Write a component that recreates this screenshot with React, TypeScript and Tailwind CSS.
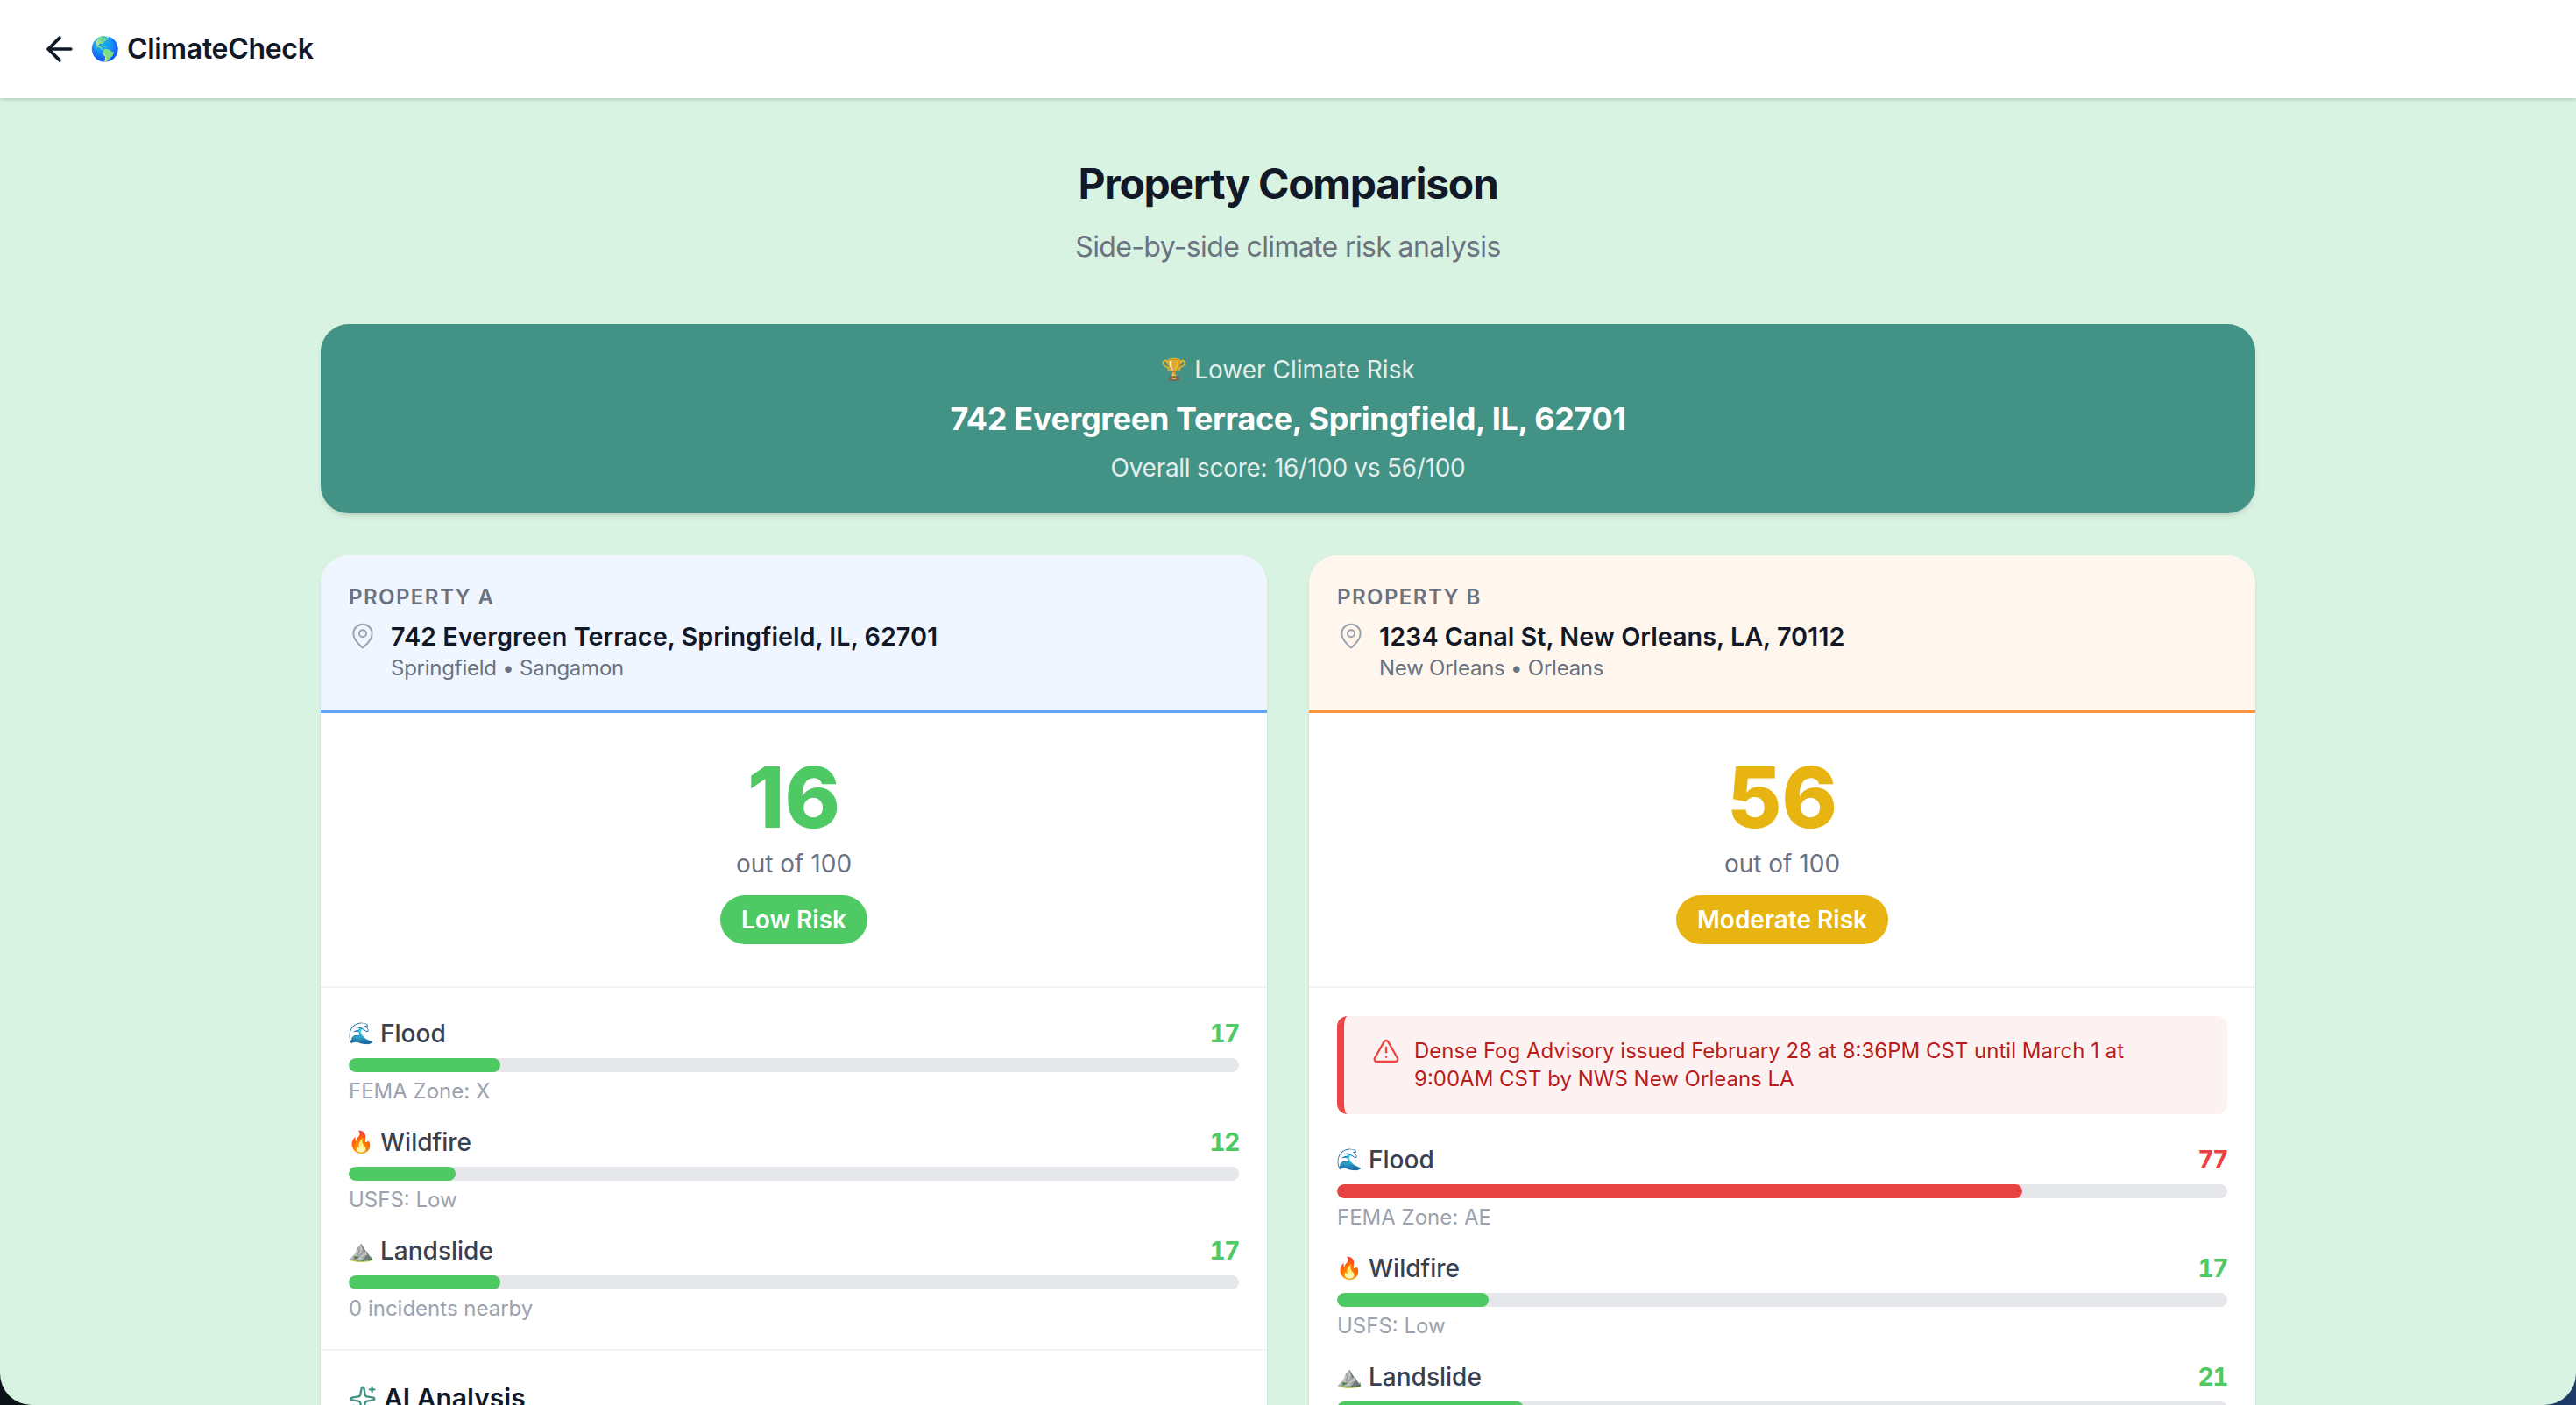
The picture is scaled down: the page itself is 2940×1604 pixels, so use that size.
/**
 * ClimateCheck — property comparison page.
 */
import { ArrowLeft, MapPin, Sparkles, TriangleAlert } from 'lucide-react'

type Risk = { emoji: string; label: string; score: number; note: string }

type Property = {
  tag: string
  address: string
  area: string
  score: number
  rating: string
  alert?: string
  risks: Risk[]
}

const PROPERTY_A: Property = {
  tag: 'Property A',
  address: '742 Evergreen Terrace, Springfield, IL, 62701',
  area: 'Springfield • Sangamon',
  score: 16,
  rating: 'Low Risk',
  risks: [
    { emoji: '🌊', label: 'Flood', score: 17, note: 'FEMA Zone: X' },
    { emoji: '🔥', label: 'Wildfire', score: 12, note: 'USFS: Low' },
    { emoji: '⛰️', label: 'Landslide', score: 17, note: '0 incidents nearby' },
  ],
}

const PROPERTY_B: Property = {
  tag: 'Property B',
  address: '1234 Canal St, New Orleans, LA, 70112',
  area: 'New Orleans • Orleans',
  score: 56,
  rating: 'Moderate Risk',
  alert: 'Dense Fog Advisory issued February 28 at 8:36PM CST until March 1 at 9:00AM CST by NWS New Orleans LA',
  risks: [
    { emoji: '🌊', label: 'Flood', score: 77, note: 'FEMA Zone: AE' },
    { emoji: '🔥', label: 'Wildfire', score: 17, note: 'USFS: Low' },
    { emoji: '⛰️', label: 'Landslide', score: 21, note: '1 incident nearby' },
  ],
}

function RiskRow({ risk }: { risk: Risk }) {
  const high = risk.score >= 70
  return (
    <div>
      <div className="flex items-center justify-between h-10">
        <span className="flex items-center gap-2 text-[28px] font-medium text-[#374151]">
          <span className="w-7 text-[24px] flex justify-center">{risk.emoji}</span>
          {risk.label}
        </span>
        <span className={`text-[28px] font-bold tabular-nums tracking-[-0.05em] ${high ? 'text-[#e84343]' : 'text-[#4fc963]'}`}>{risk.score}</span>
      </div>
      <div className="mt-2 h-4 rounded-full bg-[#e5e7eb] overflow-hidden">
        <div
          className={`h-full rounded-full ${high ? 'bg-[#e84343]' : 'bg-[#4fc963]'}`}
          style={{ width: `${risk.score}%` }}
        />
      </div>
      <div className="mt-2 text-[24px] leading-[28px] text-[#9ca3af]">{risk.note}</div>
    </div>
  )
}

function PropertyCard({ property, tone }: { property: Property; tone: 'a' | 'b' }) {
  const low = property.score < 40
  return (
    <div className="rounded-[32px] bg-white shadow-sm overflow-hidden">
      <div className={tone === 'a'
        ? 'px-8 pt-8 pb-8 bg-[#eff6ff] border-b-4 border-[#60a5fa]'
        : 'px-8 pt-8 pb-8 bg-[#fff7ed] border-b-4 border-[#fb923c]'}
      >
        <div className="text-[24px] leading-8 font-semibold uppercase tracking-[0.06em] text-[#6b7280]">{property.tag}</div>
        <div className="mt-2 flex gap-4">
          <MapPin className="w-8 h-8 mt-1 shrink-0 text-[#9ca3af]" strokeWidth={1.5} />
          <div>
            <div className="text-[28.8px] leading-[42px] font-semibold text-[#111827]">{property.address}</div>
            <div className="text-[24px] leading-[30px] tracking-[-0.01em] text-[#6b7280]">{property.area}</div>
          </div>
        </div>
      </div>

      <div className="pt-12 pb-12 flex flex-col items-center border-b-2 border-[#f3f4f6]">
        <div className={`text-[96px] leading-[96px] font-extrabold ${low ? 'text-[#4fc963]' : 'text-[#e8b412]'}`}>{property.score}</div>
        <div className="mt-2 text-[28px] leading-10 text-[#6b7280]">out of 100</div>
        <div className={`mt-4 h-14 px-6 rounded-full flex items-center text-[28px] font-semibold text-white ${low ? 'bg-[#4fc963]' : 'bg-[#e8b412]'}`}>
          {property.rating}
        </div>
      </div>

      <div className="px-8 pt-8 pb-8 flex flex-col gap-6 border-b-2 border-[#f3f4f6]">
        {property.alert && (
          <div className="mb-2 px-8 py-6 flex gap-4 rounded-xl border-l-8 border-[#ef4444] bg-[#fdf2f2]">
            <TriangleAlert className="w-8 h-8 shrink-0 text-[#ef4444]" strokeWidth={1.75} />
            <div className="text-[24px] leading-8 text-[#b91c1c]">{property.alert}</div>
          </div>
        )}
        {property.risks.map(r => <RiskRow key={r.label} risk={r} />)}
      </div>

      <div className="p-8">
        <div className="flex items-center gap-2 text-[30px] font-semibold text-[#111827]">
          <Sparkles className="w-8 h-8 text-[#429285]" strokeWidth={1.75} /> AI Analysis
        </div>
      </div>
    </div>
  )
}

export default function App() {
  return (
    <div className="h-[1604px] bg-linear-to-r from-[#0b1218] to-[#1c3a66] overflow-hidden font-['Inter',sans-serif]">
      <div className="h-full bg-[#d9f3e2] rounded-b-[36px] overflow-hidden">
        <header className="h-[112px] bg-white shadow-[0_2px_4px_rgba(0,0,0,0.15)] flex items-center pl-[46px]">
          <ArrowLeft className="w-11 h-11 text-[#111827]" strokeWidth={2} />
          <span className="ml-[14px] w-8 text-[27px] flex justify-center">🌎</span>
          <span className="ml-[9px] text-[32px] font-semibold tracking-[-0.01em] text-[#111827]">ClimateCheck</span>
        </header>

        <main className="w-[2208px] mx-auto pt-16">
          <h1 className="text-center text-[48px] leading-[68px] font-bold tracking-[-0.027em] text-[#111827]">Property Comparison</h1>
          <p className="mt-[18px] text-center text-[32px] leading-10 tracking-[-0.02em] text-[#6b7280]">Side-by-side climate risk analysis</p>

          <div className="mt-[68px] py-8 rounded-[32px] bg-[#429285] shadow-md text-center text-white">
            <div className="flex items-center justify-center gap-2 text-[28px] leading-10 text-white/85">
              <span className="text-[24px]">🏆</span>
              Lower Climate Risk
            </div>
            <div className="mt-3 text-[36px] leading-[48px] font-bold tracking-[-0.01em]">{PROPERTY_A.address}</div>
            <div className="mt-3 text-[28px] leading-10 tracking-[-0.01em] text-white/85">Overall score: 16/100 vs 56/100</div>
          </div>

          <div className="mt-12 grid grid-cols-2 gap-12">
            <PropertyCard property={PROPERTY_A} tone="a" />
            <PropertyCard property={PROPERTY_B} tone="b" />
          </div>
        </main>
      </div>
    </div>
  )
}
